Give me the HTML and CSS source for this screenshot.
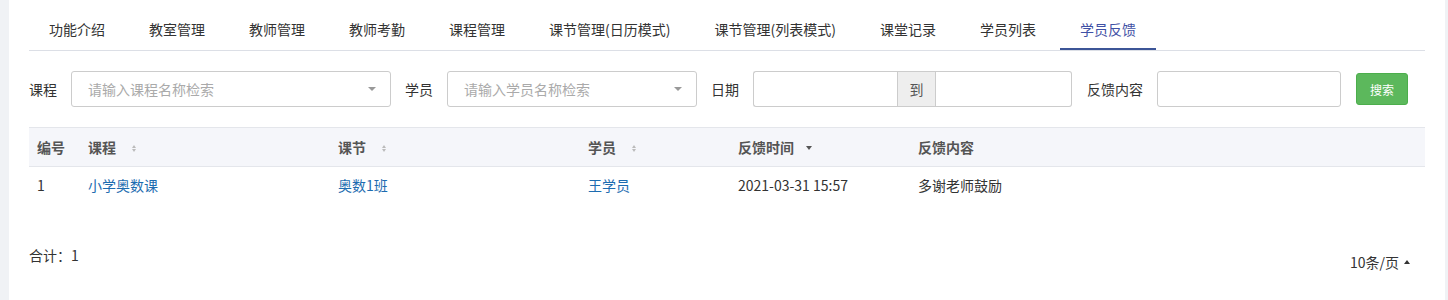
FILE: index.html
```html
<!DOCTYPE html>
<html lang="zh-CN">
<head>
<meta charset="utf-8">
<title>学员反馈</title>
<link rel="stylesheet" href="styles.css">
</head>
<body>
<div class="panel">
  <ul class="tabs">
    <li class="tab">功能介绍</li>
    <li class="tab">教室管理</li>
    <li class="tab">教师管理</li>
    <li class="tab">教师考勤</li>
    <li class="tab">课程管理</li>
    <li class="tab">课节管理(日历模式)</li>
    <li class="tab">课节管理(列表模式)</li>
    <li class="tab">课堂记录</li>
    <li class="tab">学员列表</li>
    <li class="tab active">学员反馈</li>
  </ul>

  <div class="filters">
    <span class="label">课程</span>
    <div class="select w-course">
      <span class="placeholder">请输入课程名称检索</span>
      <span class="caret"></span>
    </div>
    <span class="label">学员</span>
    <div class="select w-student">
      <span class="placeholder">请输入学员名称检索</span>
      <span class="caret"></span>
    </div>
    <span class="label">日期</span>
    <div class="daterange">
      <div class="date-input d1"></div>
      <div class="addon">到</div>
      <div class="date-input d2"></div>
    </div>
    <span class="label">反馈内容</span>
    <div class="input w-content"></div>
    <button class="btn-search">搜索</button>
  </div>

  <table class="grid">
    <thead>
      <tr>
        <th class="c-no">编号</th>
        <th class="c-course">课程<span class="sort"><i class="up"></i><i class="down"></i></span></th>
        <th class="c-lesson">课节<span class="sort"><i class="up"></i><i class="down"></i></span></th>
        <th class="c-student">学员<span class="sort"><i class="up"></i><i class="down"></i></span></th>
        <th class="c-time">反馈时间<span class="sort-desc"></span></th>
        <th class="c-content">反馈内容</th>
      </tr>
    </thead>
    <tbody>
      <tr>
        <td>1</td>
        <td><a class="link">小学奥数课</a></td>
        <td><a class="link">奥数1班</a></td>
        <td><a class="link">王学员</a></td>
        <td>2021-03-31 15:57</td>
        <td>多谢老师鼓励</td>
      </tr>
    </tbody>
  </table>

  <div class="footer">
    <span class="total">合计：1</span>
    <span class="pagesize">10条/页<span class="up-caret"></span></span>
  </div>
</div>
</body>
</html>
```
FILE: styles.css
```css
* { box-sizing: border-box; }
html, body { margin: 0; padding: 0; }
body {
  background: #f0f2f5;
  font-family: "Microsoft YaHei", "Noto Sans CJK SC", "Noto Sans", sans-serif;
  font-size: 14px;
  color: #333;
  height: 300px;
  overflow: hidden;
}
.panel {
  margin-left: 9px;
  width: 1436px;
  height: 300px;
  background: #fff;
  padding: 8px 20px 0 20px;
}
.tabs {
  list-style: none;
  margin: 0;
  padding: 0;
  display: flex;
  border-bottom: 1px solid #dcdfe6;
  height: 43px;
}
.tab {
  padding: 0 20px;
  margin-right: 4px;
  height: 42px;
  line-height: 42px;
  color: #333;
  white-space: nowrap;
}
.tab.active {
  color: #3f51a5;
  border-bottom: 2px solid #3c5597;
  height: 42px;
}

.filters {
  display: flex;
  align-items: center;
  margin-top: 20px;
  height: 36px;
}
.label {
  color: #333;
  margin-right: 14px;
  white-space: nowrap;
}
.select, .input, .date-input {
  height: 36px;
  border: 1px solid #ccc;
  border-radius: 3px;
  background: #fff;
}
.select {
  display: flex;
  align-items: center;
  justify-content: space-between;
  padding: 0 14px 0 16px;
  margin-right: 14px;
}
.w-course { width: 320px; }
.w-student { width: 250px; }
.placeholder { color: #aaa; }
.caret {
  width: 0; height: 0;
  border-left: 4px solid transparent;
  border-right: 4px solid transparent;
  border-top: 4px solid #999;
}
.daterange {
  display: flex;
  margin-right: 15px;
}
.date-input { width: 144px; }
.date-input.d1 { border-radius: 3px 0 0 3px; border-right: none; }
.date-input.d2 { width: 136px; border-radius: 0 3px 3px 0; border-left: none; }
.addon {
  width: 39px;
  height: 36px;
  line-height: 34px;
  text-align: center;
  background: #eee;
  border: 1px solid #ccc;
  color: #555;
}
.w-content { width: 184px; margin-right: 15px; }
.btn-search {
  width: 52px;
  height: 32px;
  background: #5cb85c;
  border: 1px solid #4cae4c;
  border-radius: 3px;
  color: #fff;
  font-family: inherit;
  font-size: 12px;
  padding: 0;
}

.grid {
  margin-top: 20px;
  width: 1396px;
  border-collapse: collapse;
  table-layout: fixed;
}
.grid th {
  background: #f5f6fa;
  height: 39px;
  border-top: 1px solid #e4e6eb;
  border-bottom: 1px solid #e4e6eb;
  text-align: left;
  font-weight: bold;
  color: #555;
  padding: 0 8px;
  white-space: nowrap;
}
.grid td {
  height: 37px;
  padding: 0 8px;
  text-align: left;
  color: #333;
  white-space: nowrap;
}
.c-no { width: 51px; }
.c-course { width: 250px; }
.c-lesson { width: 250px; }
.c-student { width: 150px; }
.c-time { width: 180px; }
.link { color: #1d6cb0; text-decoration: none; }
.sort {
  display: inline-flex;
  flex-direction: column;
  gap: 1px;
  margin-left: 16px;
  vertical-align: middle;
  position: relative;
  top: -1px;
}
.sort i {
  display: block;
  width: 0; height: 0;
  border-left: 2px solid transparent;
  border-right: 2px solid transparent;
}
.sort i.up { border-bottom: 3px solid #bbb; }
.sort i.down { border-top: 3px solid #bbb; }
.sort-desc {
  display: inline-block;
  width: 0; height: 0;
  border-left: 3.5px solid transparent;
  border-right: 3.5px solid transparent;
  border-top: 4px solid #555;
  margin-left: 12px;
  vertical-align: middle;
  position: relative;
  top: -1px;
}

.footer {
  display: flex;
  justify-content: space-between;
  align-items: flex-start;
  margin-top: 41px;
  width: 1396px;
}
.total { font-size: 14px; color: #333; }
.pagesize {
  margin-top: 7px;
  margin-right: 15px;
  color: #333;
  display: inline-flex;
  align-items: center;
}
.up-caret {
  width: 0; height: 0;
  border-left: 3.5px solid transparent;
  border-right: 3.5px solid transparent;
  border-bottom: 4px solid #333;
  margin-left: 5px;
}
```
